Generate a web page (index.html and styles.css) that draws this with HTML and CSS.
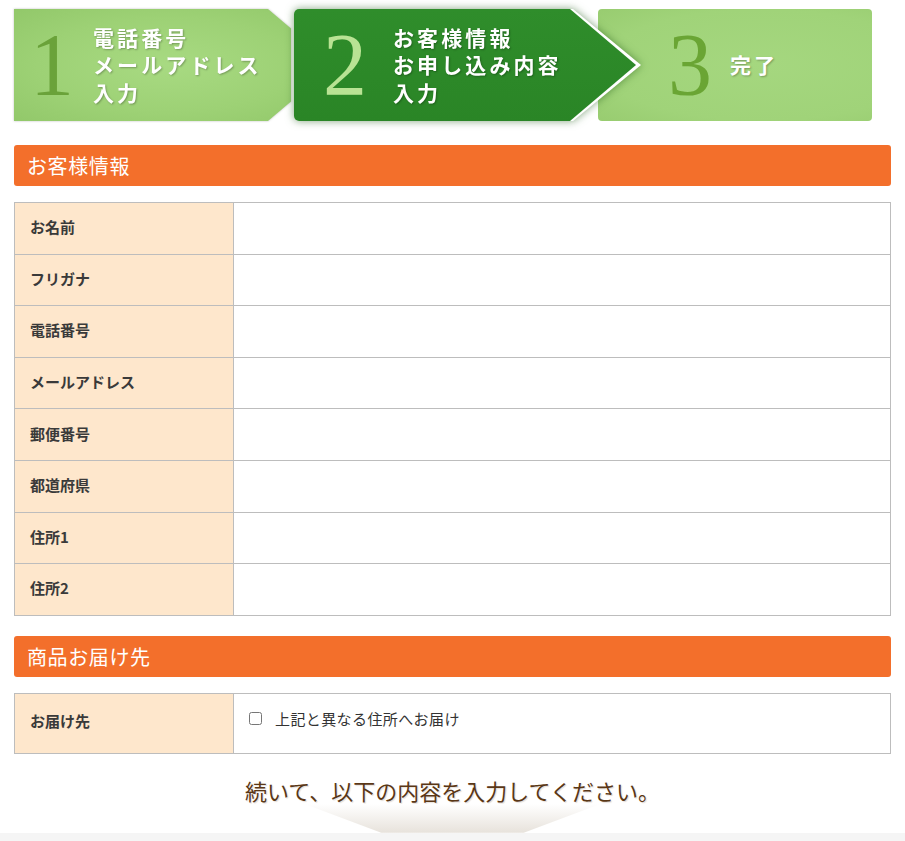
FILE: index.html
```html
<!DOCTYPE html>
<html lang="ja">
<head>
<meta charset="utf-8">
<title>お客様情報入力</title>
<link rel="stylesheet" href="styles.css">
</head>
<body>
<div class="page">
  <div class="steps">
    <div class="step step1">
      <div class="face">
        <span class="num">1</span>
        <span class="label">電話番号<br>メールアドレス<br>入力</span>
      </div>
    </div>
    <div class="step step2">
      <div class="frame">
        <div class="face">
          <span class="num">2</span>
          <span class="label">お客様情報<br>お申し込み内容<br>入力</span>
        </div>
      </div>
    </div>
    <div class="step step3">
      <div class="face">
        <span class="num">3</span>
        <span class="label">完了</span>
      </div>
    </div>
  </div>

  <h2 class="sec-head first">お客様情報</h2>
  <table class="form-table">
    <tr><th>お名前</th><td></td></tr>
    <tr><th>フリガナ</th><td></td></tr>
    <tr><th>電話番号</th><td></td></tr>
    <tr><th>メールアドレス</th><td></td></tr>
    <tr><th>郵便番号</th><td></td></tr>
    <tr><th>都道府県</th><td></td></tr>
    <tr><th>住所1</th><td></td></tr>
    <tr><th>住所2</th><td></td></tr>
  </table>

  <h2 class="sec-head">商品お届け先</h2>
  <table class="form-table delivery">
    <tr>
      <th>お届け先</th>
      <td><label class="check"><input type="checkbox"><span>上記と異なる住所へお届け</span></label></td>
    </tr>
  </table>

  <div class="next">
    <p class="next-text">続いて、以下の内容を入力してください。</p>
    <div class="next-arrow"></div>
  </div>
</div>
<div class="band"></div>
</body>
</html>
```
FILE: styles.css
```css
html, body {
  margin: 0;
  padding: 0;
  background: #fff;
  overflow: hidden;
}
body {
  font-family: "Noto Sans CJK JP", "Noto Sans", sans-serif;
  color: #333;
}
.page {
  padding: 9px 14px 0;
}

/* steps */
.steps {
  display: flex;
  height: 112px;
  width: 858px;
}
.step {
  height: 112px;
  flex: none;
}
.step .face {
  height: 112px;
  display: flex;
  align-items: center;
  box-sizing: border-box;
}
.num {
  font-family: "Liberation Serif", "DejaVu Serif", serif;
  font-size: 88px;
  line-height: 1;
  text-align: center;
  flex: none;
}
.label {
  color: #fff;
  font-weight: bold;
  font-size: 21px;
  line-height: 27.5px;
  letter-spacing: 3.1px;
  text-shadow: 1px 1px 2px rgba(0, 0, 0, 0.28);
  white-space: nowrap;
}
.step1 {
  width: 277px;
  margin-right: 3px;
  filter: drop-shadow(0 0 1px rgba(0, 0, 0, 0.25));
}
.step1 .face {
  width: 277px;
  clip-path: polygon(0 0, 254px 0, 320px 56px, 254px 112px, 0 112px);
  background: radial-gradient(ellipse at 55% 50%, #a8da82 0%, #9dd175 60%, #92c86a 100%);
  padding-left: 16px;
}
.step1 .num {
  width: 40px;
  color: #6aa23a;
  margin-right: 23px;
}
.step2 {
  width: 347px;
  margin-right: -43px;
  z-index: 2;
  filter: drop-shadow(0 0 4px rgba(30, 90, 20, 0.55));
}
.step2 .frame {
  width: 347px;
  height: 112px;
  background: #fff;
  border-radius: 5px;
  clip-path: polygon(0 0, 279px 0, 347px 56px, 279px 112px, 0 112px);
}
.step2 .face {
  width: 342px;
  border-radius: 5px;
  clip-path: polygon(0 0, 276px 0, 342px 56px, 276px 112px, 0 112px);
  background: linear-gradient(#2f8d2b, #2a8526);
  padding-left: 26px;
}
.step2 .num {
  width: 50px;
  color: #b9e394;
  margin-right: 23px;
}
.step3 {
  width: 274px;
  border-radius: 4px;
  background: radial-gradient(ellipse at 60% 50%, #a5d77f 0%, #a0d379 70%, #98cc70 100%);
  z-index: 1;
}
.step3 .face {
  padding-left: 70px;
}
.step3 .num {
  width: 40px;
  color: #6aa534;
  margin-right: 22px;
}

/* section headers */
.sec-head {
  margin: 20px 0 0;
  height: 41px;
  line-height: 41px;
  background: #f36f2b;
  border-radius: 3px;
  color: #fff;
  font-size: 20px;
  font-weight: normal;
  letter-spacing: 0.6px;
  padding-left: 13px;
}
.sec-head.first {
  margin-top: 24px;
}

/* tables */
.form-table {
  width: 100%;
  border-collapse: collapse;
  margin-top: 16px;
  table-layout: fixed;
}
.form-table th,
.form-table td {
  border: 1px solid #bdbdbd;
  height: 51.6px;
  padding: 0 15px 3px;
  box-sizing: border-box;
}
.form-table th {
  width: 219px;
  background: #fee7cc;
  text-align: left;
  font-size: 15px;
  font-weight: bold;
  color: #3a3a3a;
}
.form-table td {
  background: #fff;
}
.delivery th {
  height: 60px;
  padding-bottom: 5px;
}
.delivery td {
  height: 60px;
  padding-bottom: 10px;
}
.check {
  display: flex;
  align-items: center;
  gap: 13px;
  font-size: 15px;
  color: #333;
  letter-spacing: 0.4px;
}
.check input {
  margin: 0;
  width: 13px;
  height: 13px;
}

/* next */
.next {
  margin-top: 22px;
  display: flex;
  flex-direction: column;
  align-items: center;
}
.next-text {
  margin: 0;
  font-size: 22px;
  line-height: 28px;
  color: #5a3716;
  text-shadow: 0 0 2px rgba(255, 255, 255, 0.9), 1px 1px 1px rgba(90, 55, 22, 0.2);
}
.next-arrow {
  width: 297px;
  height: 29px;
  background: linear-gradient(#ffffff, #e7e2db);
  clip-path: polygon(0 0, 100% 0, 74% 100%, 26% 100%);
}
.band {
  height: 8px;
  background: #f5f5f5;
}
```
